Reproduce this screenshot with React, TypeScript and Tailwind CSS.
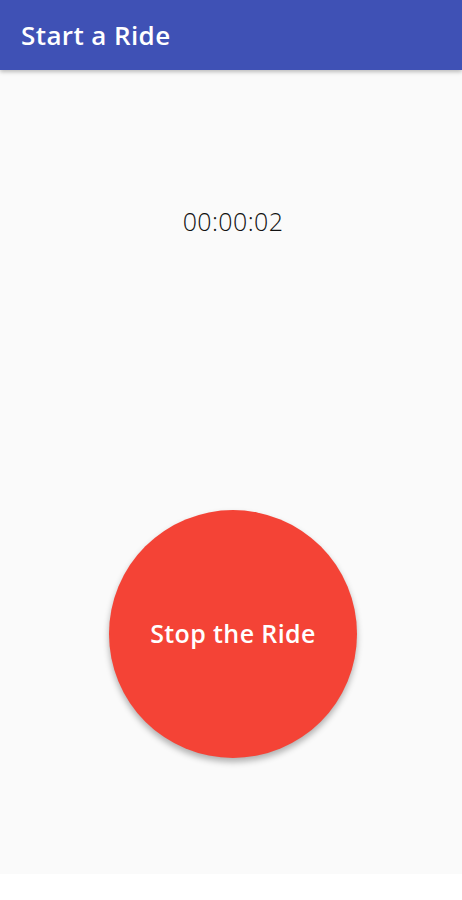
export default function App() {
  return (
    <div className="w-[462px] h-[900px] bg-white flex flex-col" style={{ fontFamily: '"Open Sans", "Noto Sans", sans-serif' }}>
      <div className="h-[70px] bg-[#3f51b5] flex items-center px-[21px] shadow-[0_2px_4px_rgba(0,0,0,0.25)] relative z-10">
        <span className="text-white text-[26px] font-semibold leading-[32px] tracking-[0.4px]">Start a Ride</span>
      </div>
      <div className="h-[804px] bg-[#fafafa] flex flex-col items-center pl-[4px]">
        <div className="mt-[135px] text-[25px] font-light text-[#111] leading-[32px] tracking-[0.4px]">00:00:02</div>
        <div className="mt-[273px] w-[248px] h-[248px] rounded-full bg-[#f44336] flex items-center justify-center shadow-[0_4px_6px_rgba(0,0,0,0.3)]">
          <span className="text-white text-[25px] font-semibold tracking-[0.4px]">Stop the Ride</span>
        </div>
      </div>
    </div>
  );
}
